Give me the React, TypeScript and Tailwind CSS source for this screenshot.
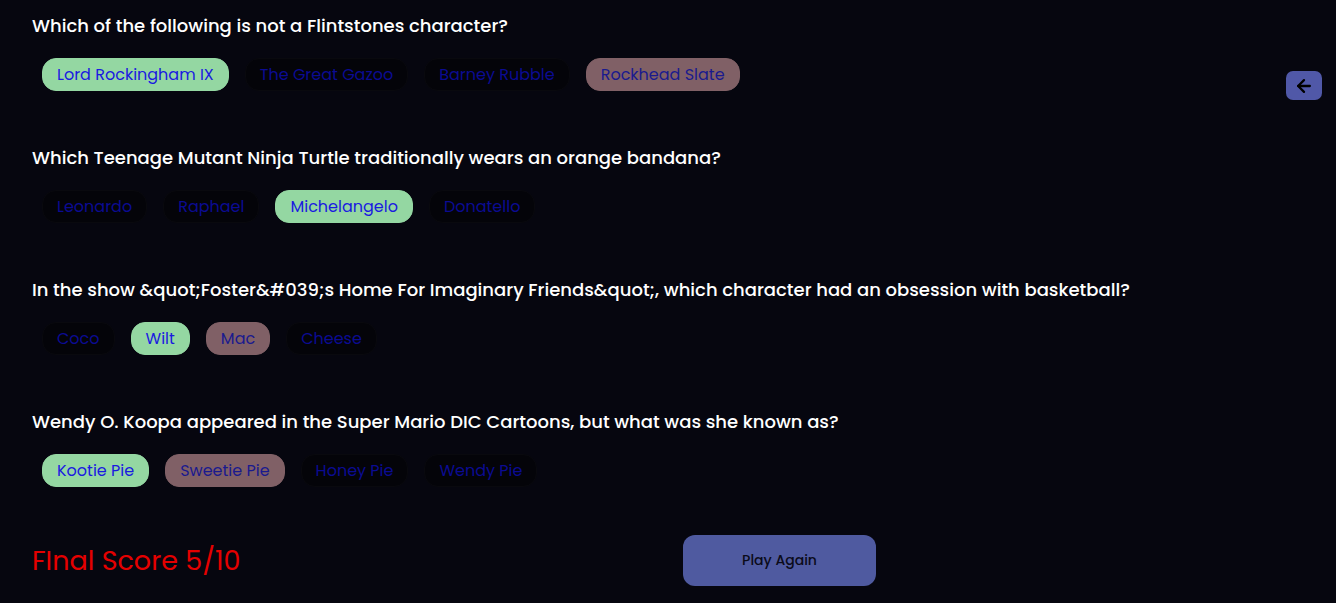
import { ArrowLeft } from 'lucide-react';

type Question = {
  text: string;
  options: string[];
  correct: string;
  picked: string;
};

const questions: Question[] = [
  {
    text: 'Which of the following is not a Flintstones character?',
    options: ['Lord Rockingham IX', 'The Great Gazoo', 'Barney Rubble', 'Rockhead Slate'],
    correct: 'Lord Rockingham IX',
    picked: 'Rockhead Slate',
  },
  {
    text: 'Which Teenage Mutant Ninja Turtle traditionally wears an orange bandana?',
    options: ['Leonardo', 'Raphael', 'Michelangelo', 'Donatello'],
    correct: 'Michelangelo',
    picked: 'Michelangelo',
  },
  {
    text: 'In the show &quot;Foster&#039;s Home For Imaginary Friends&quot;, which character had an obsession with basketball?',
    options: ['Coco', 'Wilt', 'Mac', 'Cheese'],
    correct: 'Wilt',
    picked: 'Mac',
  },
  {
    text: 'Wendy O. Koopa appeared in the Super Mario DIC Cartoons, but what was she known as?',
    options: ['Kootie Pie', 'Sweetie Pie', 'Honey Pie', 'Wendy Pie'],
    correct: 'Kootie Pie',
    picked: 'Sweetie Pie',
  },
];

function Option({ label, correct, picked }: { label: string; correct: boolean; picked: boolean }) {
  // correcta en verde, elegida mal en rosado, el resto apagado
  let cls = 'bg-[#040409] border-[#09090e] text-[#0b0b92]';
  if (correct) cls = 'bg-[#94d7a2] border-[#94d7a2] text-[#1a1ae0]';
  else if (picked) cls = 'bg-[#806066] border-[#806066] text-[#1a1a8e]';

  return (
    <button className={`mx-[8px] h-[33px] rounded-[14px] border px-[14px] text-[16px] leading-none ${cls}`}>
      {label}
    </button>
  );
}

export default function App() {
  return (
    <div
      className="relative min-h-[603px] w-full bg-[#06060f] px-[32px] pt-[14px] text-white"
      style={{ fontFamily: 'Poppins, Inter, "Open Sans", sans-serif' }}
    >
      {questions.map((q) => (
        <div key={q.text} className="mb-[55px]">
          <h2 className="text-[18px] font-medium leading-[24px]">{q.text}</h2>
          <div className="mt-[20px] flex items-center pl-[2px]">
            {q.options.map((o) => (
              <Option key={o} label={o} correct={o === q.correct} picked={o === q.picked} />
            ))}
          </div>
        </div>
      ))}

      <div className="-mt-[7px] grid grid-cols-2 items-center">
        <p className="text-[27px] leading-none text-[#e50000]">FInal Score 5/10</p>
        <div className="pl-[15px]">
          <button className="h-[51px] w-[193px] rounded-[12px] bg-[#4f5aa0] text-[14px] font-medium text-[#0b0b1a]">
            Play Again
          </button>
        </div>
      </div>

      <button className="absolute right-[14px] top-[71px] flex h-[29px] w-[36px] items-center justify-center rounded-[7px] bg-[#5058a8]">
        <ArrowLeft size={20} strokeWidth={2.75} color="#000000" />
      </button>
    </div>
  );
}
